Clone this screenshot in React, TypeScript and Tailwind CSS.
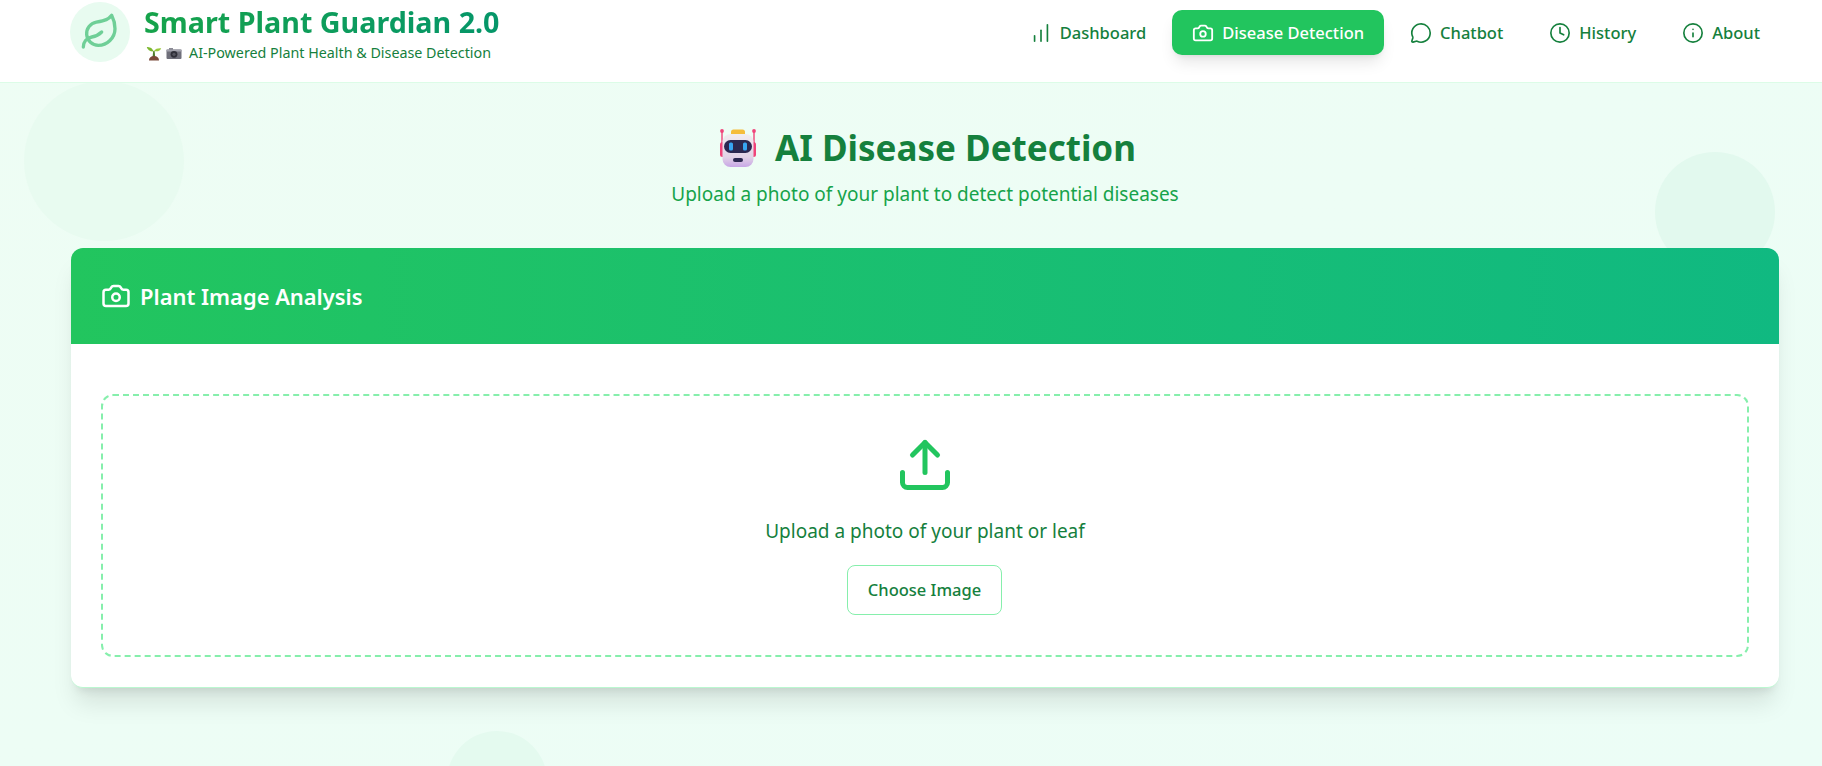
import React from "react";
import { ChartNoAxesColumnIncreasing, Camera, MessageCircle, Clock, Info, Upload, Leaf } from "lucide-react";

function Robot({ className }: { className?: string }) {
  return (
    <svg viewBox="0 0 40 40" className={className}>
      <defs>
        <linearGradient id="rb" x1="0" y1="0" x2="0" y2="1">
          <stop offset="0" stopColor="#f1ecef" />
          <stop offset="0.7" stopColor="#e2d3e6" />
          <stop offset="1" stopColor="#c7a6e6" />
        </linearGradient>
      </defs>
      <rect x="3.300" y="3" width="1.400" height="13" fill="#f0447a" />
      <rect x="35.300" y="3" width="1.400" height="13" fill="#f0447a" />
      <circle cx="4" cy="3" r="1.900" fill="#f0447a" />
      <circle cx="36" cy="3" r="1.900" fill="#f0447a" />
      <rect x="2" y="14" width="5" height="15" rx="2.500" fill="#f0447a" />
      <rect x="33" y="14" width="5" height="15" rx="2.500" fill="#f0447a" />
      <rect x="13" y="1.500" width="14" height="6.500" rx="2.500" fill="#f5bd3a" />
      <rect x="4.500" y="6" width="31" height="33" rx="8" fill="url(#rb)" />
      <rect x="6" y="12" width="28" height="13" rx="6.500" fill="#2b2850" />
      <rect x="11" y="14.500" width="4" height="8" rx="1.600" fill="#37a5f2" />
      <rect x="25" y="14.500" width="4" height="8" rx="1.600" fill="#37a5f2" />
      <rect x="15" y="30" width="10" height="4" rx="2" fill="#2b2850" />
    </svg>
  );
}

function Seedling() {
  return (
    <svg viewBox="0 0 16 16" className="h-[16px] w-[16px]">
      <path d="M7.200 6h1.400l.6 6H6.600z" fill="#4d7c2a" />
      <path d="M7.800 6.500C6 2.600 3.400 2 .8 2c.5 2.600 3 4.600 7 4.500z" fill="#7cb82f" />
      <path d="M8 6C9.500 3.500 12 3 15.200 3.200 14.500 5.500 11.500 7 8 6z" fill="#9ac93c" />
      <path d="M3 15.500c0-3 2-4.500 5-4.500s5 1.500 5 4.500z" fill="#7b4a3a" />
    </svg>
  );
}

function CameraEmoji() {
  return (
    <svg viewBox="0 0 16 16" className="h-[16px] w-[16px]">
      <rect x="3" y="3" width="4" height="2" fill="#8a8a94" />
      <rect x="0.500" y="4.500" width="15" height="9.500" rx="1" fill="#6f6f7a" />
      <rect x="0.500" y="4.500" width="15" height="2" fill="#a3a3ad" />
      <circle cx="8" cy="9.300" r="3.400" fill="#2f2f38" />
      <circle cx="8" cy="9.300" r="1.600" fill="#55555f" />
    </svg>
  );
}

const nav = [
  { label: "Dashboard", Icon: ChartNoAxesColumnIncreasing, active: false },
  { label: "Disease Detection", Icon: Camera, active: true },
  { label: "Chatbot", Icon: MessageCircle, active: false },
  { label: "History", Icon: Clock, active: false },
  { label: "About", Icon: Info, active: false },
];

export default function App() {
  return (
    <div className="relative h-[766px] overflow-hidden bg-gradient-to-br from-[#eefdf4] to-[#ecfdf6] font-['Noto_Sans','Open_Sans',sans-serif]">
      <div className="absolute left-[24px] top-[81px] h-[160px] w-[160px] rounded-full bg-[#e8fbf0]" />
      <div className="absolute left-[1655px] top-[152px] h-[120px] w-[120px] rounded-full bg-[#e2f9ee]" />
      <div className="absolute left-[447px] top-[731px] h-[100px] w-[100px] rounded-full bg-[#e4faef]" />

      <header className="relative flex h-[83px] items-start justify-between border-b border-[#dcfce7] bg-white pl-[70px] pr-[42px]">
        <div className="flex items-start gap-[14px] pt-[2px]">
          <div className="flex h-[60px] w-[60px] items-center justify-center rounded-full bg-[#e8fbf0]">
            <Leaf className="h-[40px] w-[40px] text-[#6fcf97]" strokeWidth={2} />
          </div>
          <div className="flex flex-col">
            <div className="bg-gradient-to-r from-[#16a34a] to-[#059669] bg-clip-text text-[28.7px] font-bold leading-[40px] text-transparent">
              Smart Plant Guardian 2.0
            </div>
            <div className="ml-[2px] mt-[1px] flex items-center gap-[4px] text-[14.3px] leading-[20px] text-[#15803d]">
              <Seedling />
              <CameraEmoji />
              <span className="ml-[3px]">AI-Powered Plant Health &amp; Disease Detection</span>
            </div>
          </div>
        </div>
        <nav className="flex items-center gap-[6px] pt-[10px]">
          {nav.map(({ label, Icon, active }) => (
            <div
              key={label}
              className={
                active
                  ? "flex h-[45px] items-center gap-[8px] rounded-[10px] bg-[#22c55e] px-[20px] pt-[1px] text-[16.5px] font-medium text-white shadow-lg"
                  : "flex h-[45px] items-center gap-[8px] rounded-[10px] px-[20px] pt-[1px] text-[16.5px] font-medium text-[#15803d]"
              }
            >
              <Icon className="h-[22px] w-[22px]" strokeWidth={active ? 2 : 1.800} />
              <span>{label}</span>
            </div>
          ))}
        </nav>
      </header>

      <main className="relative pl-[71px] pr-[43px]">
        <div className="flex h-[165px] flex-col items-center pt-[40px]">
          <div className="ml-[4px] flex items-center gap-[17px]">
            <Robot className="h-[40px] w-[40px]" />
            <h1 className="text-[35px] font-bold leading-[50px] text-[#15803d]">AI Disease Detection</h1>
          </div>
          <p className="mt-[8px] text-[19px] leading-[26px] text-[#16a34a]">
            Upload a photo of your plant to detect potential diseases
          </p>
        </div>

        <section className="overflow-hidden rounded-[12px] border-b border-[#bbf7d0] bg-white shadow-[0_20px_25px_-5px_rgba(0,0,0,0.1),0_8px_10px_-6px_rgba(0,0,0,0.1)]">
          <div className="flex h-[96px] items-center gap-[9px] bg-gradient-to-r from-[#22c55e] to-[#10b981] px-[30px] text-white">
            <Camera className="h-[30px] w-[30px]" strokeWidth={2} />
            <h2 className="pt-[3px] text-[21.9px] font-semibold">Plant Image Analysis</h2>
          </div>
          <div className="p-[30px] pt-[50px]">
            <div className="flex h-[263px] flex-col items-center rounded-[12px] border-2 border-dashed border-[#86efac] pt-[39px]">
              <Upload className="h-[60px] w-[60px] text-[#22c55e]" strokeWidth={2} />
              <p className="mt-[23px] text-[19px] leading-[26px] text-[#15803d]">Upload a photo of your plant or leaf</p>
              <button className="mr-[1px] mt-[21px] h-[50px] w-[155px] rounded-[8px] border border-[#86efac] bg-white text-[16.5px] font-medium text-[#15803d]">
                Choose Image
              </button>
            </div>
          </div>
        </section>
      </main>
    </div>
  );
}
